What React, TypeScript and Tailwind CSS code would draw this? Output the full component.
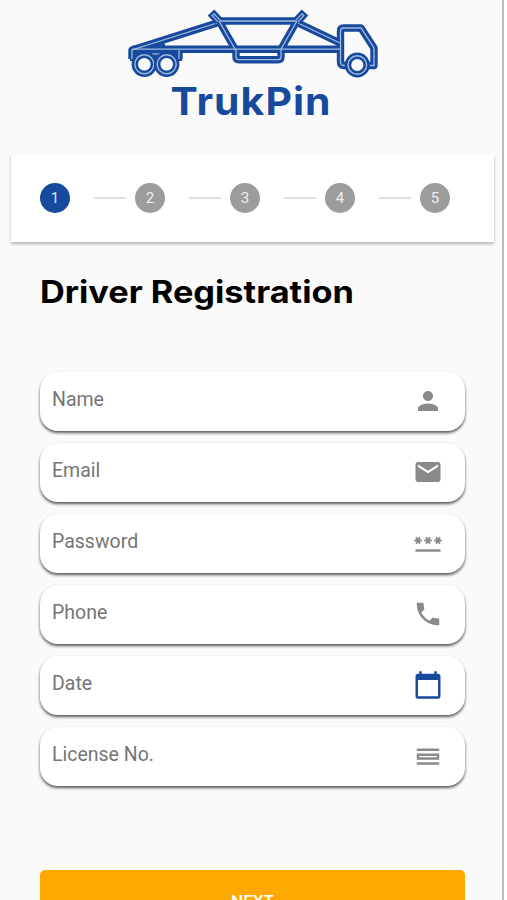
import type { ReactNode } from "react";
import { MdCalendarToday, MdEmail, MdOutlineCalendarViewDay, MdPassword, MdPerson, MdPhone } from "react-icons/md";

type Field = {
    label: string;
    icon: ReactNode;
};

const fields: Field[] = [
    { label: "Name", icon: <MdPerson /> },
    { label: "Email", icon: <MdEmail /> },
    { label: "Password", icon: <MdPassword /> },
    { label: "Phone", icon: <MdPhone /> },
    { label: "Date", icon: <MdCalendarToday className="text-[#174a9c]" /> },
    { label: "License No.", icon: <MdOutlineCalendarViewDay /> },
];

const steps = [1, 2, 3, 4, 5];

// every truck part is a thick line with a thin light line inside it
const truckLines = [
    "M132 59V50L217 23",
    "M132 49.2H340",
    "M179 59V50",
    "M219 21L235 49",
    "M219 21H297",
    "M297 21L281 49",
    "M298 23L340 43",
    "M236 49V57Q236 59.7 239 59.7H278Q281 59.7 281 57V49",
    "M340.5 62V31Q340.5 28 343.5 28H361L374 48V65.5H344Q340.5 65.5 340.5 62Z",
];

// posts at both ends of the top beam
const posts = ["M211 12.5L219 21", "M305 12.5L297 21"];

const wheels = [
    { cx: 144.3, cy: 64.3, r: 9.5 },
    { cx: 166.7, cy: 64.3, r: 9.5 },
    { cx: 357.3, cy: 65, r: 9.3 },
];

function TruckLogo() {
    return (
        <svg viewBox="122 6 258 74" width="258" height="74" fill="none" className="shrink-0">
            <path d="M130 50L165 43.5V47H182V61H130Z" fill="#174a9c" />
            {truckLines.map((d) => (
                <path key={d} d={d} stroke="#174a9c" strokeWidth="7.4" strokeLinejoin="round" />
            ))}
            {truckLines.map((d) => (
                <path key={d} d={d} stroke="#a3bae0" strokeWidth="1.3" />
            ))}
            {posts.map((d) => (
                <g key={d}>
                    <path d={d} stroke="#174a9c" strokeWidth="9" />
                    <path d={d} stroke="#a3bae0" strokeWidth="3.8" strokeDasharray="0 2.4 20" />
                    <path d={d} stroke="#174a9c" strokeWidth="1.4" strokeDasharray="0 3.6 5" />
                </g>
            ))}
            <path d="M152 54H160" stroke="#a3bae0" strokeWidth="1.2" />
            {wheels.map((w) => (
                <g key={w.cx}>
                    <circle {...w} fill="#fafafa" stroke="#174a9c" strokeWidth="6.4" />
                    <circle {...w} stroke="#a3bae0" strokeWidth="1.4" />
                </g>
            ))}
        </svg>
    );
}

export default function App() {
    return (
        <div className="flex h-[900px] w-[507px] overflow-hidden bg-white font-['Roboto',sans-serif]">
            <div className="flex w-[504px] shrink-0 flex-col border-r-2 border-[#bdbdbd] bg-[#fafafa]">

                {/* Logo */}
                <div className="flex h-[154px] shrink-0 flex-col items-center pt-1.5">
                    <TruckLogo />
                    <div className="origin-center scale-x-[1.075] font-['Inter',sans-serif] text-[38px] leading-[42px] font-bold tracking-[1px] text-[#174a9c]">
                        TrukPin
                    </div>
                </div>

                {/* Stepper */}
                <div className="mr-2 ml-[11px] flex h-[88px] shrink-0 items-center bg-white pl-[29px] shadow-[0_2px_3px_rgba(0,0,0,0.28)]">
                    {steps.map((step) => (
                        <div key={step} className="flex items-center">
                            {step > 1 && <span className="mr-[9px] ml-6 h-0.5 w-8 bg-[#dedede]" />}
                            <span
                                className={`flex size-[30px] items-center justify-center rounded-full text-[15px] ${step === 1 ? "bg-[#174a9c] text-[#dde6f5]" : "bg-[#9c9c9c] text-[#efefef]"
                                    }`}
                            >
                                {step}
                            </span>
                        </div>
                    ))}
                </div>

                <h1 className="mt-[30px] ml-10 w-fit shrink-0 origin-left scale-x-[1.107] font-['Inter',sans-serif] text-[31px] leading-10 font-bold whitespace-nowrap text-black">
                    Driver Registration
                </h1>

                {/* Form */}
                <form className="mt-[60px] ml-10 flex w-[425px] shrink-0 flex-col gap-3">
                    {fields.map((field) => (
                        <label
                            key={field.label}
                            className="flex h-[59px] items-center justify-between rounded-[18px] bg-white pr-[22px] pl-3 shadow-[0_2px_3px_rgba(0,0,0,0.65)]"
                        >
                            <span className="pb-1 text-[19.5px] text-[#757575]">{field.label}</span>
                            <span className="pb-px text-[30px] text-[#8a8a8a]">{field.icon}</span>
                        </label>
                    ))}
                </form>

                <button className="mt-[84px] ml-10 h-[63px] w-[425px] shrink-0 rounded-[5px] bg-[#ffa800] text-[17px] font-medium text-white">
                    NEXT
                </button>
            </div>
        </div>
    );
}
